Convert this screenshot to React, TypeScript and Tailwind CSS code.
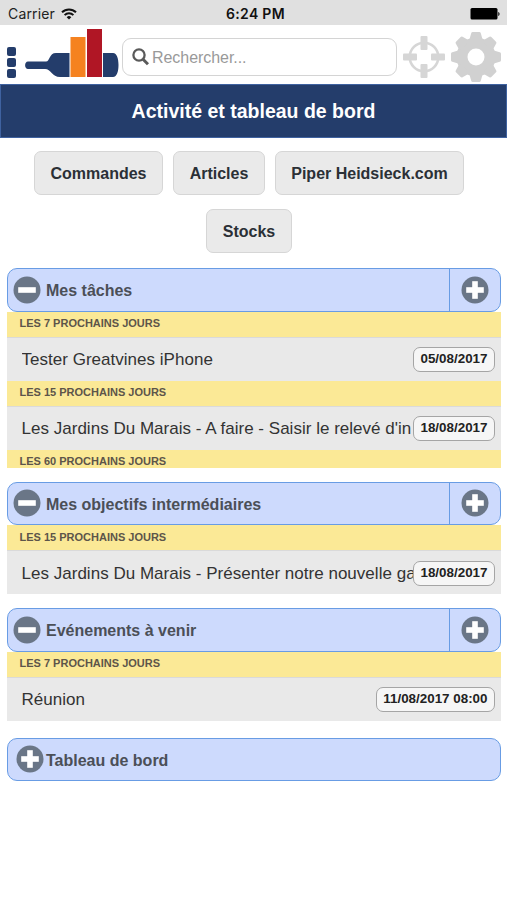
import { ReactNode } from "react";

type Row = {
  heading: string;
  label?: string;
  date?: string;
};

type PanelProps = {
  title: string;
  rows: Row[];
  className?: string;
};

const shortcuts = [
  { label: "Commandes", width: "w-[129px]" },
  { label: "Articles", width: "w-[92px]" },
  { label: "Piper Heidsieck.com", width: "w-[189px]" },
  { label: "Stocks", width: "w-[86px]" },
];

const tasks: Row[] = [
  {
    heading: "Les 7 prochains jours",
    label: "Tester Greatvines iPhone",
    date: "05/08/2017",
  },
  {
    heading: "Les 15 prochains jours",
    label: "Les Jardins Du Marais - A faire - Saisir le relevé d'in",
    date: "18/08/2017",
  },
  { heading: "Les 60 prochains jours" },
];

const goals: Row[] = [
  {
    heading: "Les 15 prochains jours",
    label: "Les Jardins Du Marais - Présenter notre nouvelle ga",
    date: "18/08/2017",
  },
];

const events: Row[] = [
  {
    heading: "Les 7 prochains jours",
    label: "Réunion",
    date: "11/08/2017 08:00",
  },
];

const gearTeeth = [0, 45, 90, 135, 180, 225, 270, 315];

function StatusBar() {
  return (
    <div className="grid h-[25px] grid-cols-3 items-center bg-[#e0e0e0] pt-[2px] pr-[6px] pl-[8px] font-[Inter,sans-serif] text-[#222]">
      <div className="flex items-center gap-[6px]">
        <span className="text-[14px] leading-none tracking-[0.15px]">Carrier</span>
        <svg width="16" height="12" viewBox="0 0 16 12" fill="none" stroke="#111" strokeWidth="2">
          <path d="M1 4.3a10 10 0 0 1 14 0" />
          <path d="M3.6 7.1a6.2 6.2 0 0 1 8.8 0" />
          <path d="M5.7 9.2a3.3 3.3 0 0 1 4.6 0L8 11.6Z" fill="#111" stroke="none" />
        </svg>
      </div>
      <span className="pl-[2px] text-center text-[14px] leading-none font-semibold tracking-[0.3px] text-[#111]">
        6:24 PM
      </span>
      <svg className="justify-self-end" width="31" height="14" viewBox="0 0 31 14">
        <rect x="0.5" y="1" width="27" height="11.5" rx="1.5" fill="#000" />
        <path d="M28.3 5v4c1.6-.4 1.6-3.6 0-4Z" fill="#000" />
      </svg>
    </div>
  );
}

function Logo() {
  return (
    <svg className="shrink-0" width="95" height="52" viewBox="0 0 95 52">
      <path
        d="M4 34.5h18C26 34.500 25 26 32 26h57c4 0 5.500 6 5.500 12s-1.500 12-5.500 12H36c-8 0-9-8-15-8H4c-3.800 0-3.800-7.500 0-7.500Z"
        fill="#243d6b"
      />
      <rect x="45.500" y="9" width="17" height="42" fill="#fff" />
      <rect x="61.500" y="1" width="17.500" height="50" fill="#fff" />
      <rect x="46.500" y="10" width="15" height="40" fill="#f58220" />
      <rect x="63" y="2" width="15" height="48" fill="#b01625" />
    </svg>
  );
}

function Crosshair() {
  return (
    <svg className="shrink-0" width="42" height="42" viewBox="0 0 42 42">
      <circle cx="21" cy="21" r="14.3" fill="none" stroke="#d6d6d6" strokeWidth="2.600" />
      <g fill="#d6d6d6">
        <rect x="17.500" y="0" width="7" height="14" rx="1" />
        <rect x="17.500" y="28" width="7" height="14" rx="1" />
        <rect x="0" y="17.500" width="14" height="7" rx="1" />
        <rect x="28" y="17.500" width="14" height="7" rx="1" />
      </g>
    </svg>
  );
}

function Gear() {
  return (
    <svg className="shrink-0" width="50" height="50" viewBox="0 0 50 50">
      <circle cx="25" cy="25" r="14" fill="none" stroke="#d1d1d1" strokeWidth="11" />
      {gearTeeth.map((angle) => (
        <path
          key={angle}
          d="M18 9 20.200 1.200Q20.500 0 21.700 0h6.600q1.200 0 1.500 1.200L32 9Z"
          transform={`rotate(${angle} 25 25)`}
          fill="#d1d1d1"
        />
      ))}
    </svg>
  );
}

function RoundIcon({ plus = false }: { plus?: boolean }) {
  return (
    <svg className="shrink-0" width="28" height="28" viewBox="0 0 28 28">
      <circle cx="14" cy="14" r="13.500" fill="#6a7687" />
      <rect x="5.200" y="11.200" width="17.600" height="5.600" fill="#fff" />
      {plus ? <rect x="11.200" y="5.200" width="5.600" height="17.600" fill="#fff" /> : null}
    </svg>
  );
}

function Header() {
  return (
    <header className="flex h-[59px] items-start">
      <div className="mt-[22px] ml-[7px] flex w-[9px] flex-col gap-[2.500px]">
        <span className="h-[8.500px] rounded-[2px] bg-[#243d6b]" />
        <span className="h-[8.500px] rounded-[2px] bg-[#243d6b]" />
        <span className="h-[8.500px] rounded-[2px] bg-[#243d6b]" />
      </div>
      <div className="mt-[2px] ml-[8px]">
        <Logo />
      </div>
      <div className="mt-[12.500px] ml-[3px] flex h-[38.500px] w-[275px] items-center rounded-[9px] border border-[#d4d4d4] pl-[9px]">
        <svg width="17" height="18" viewBox="0 0 17 18" fill="none" stroke="#5a5a5a">
          <circle cx="7" cy="7" r="5.600" strokeWidth="2.300" />
          <path d="M11 11.200 16 16.300" strokeWidth="3" />
        </svg>
        <span className="ml-[3px] pt-[2px] text-[16px] tracking-[-0.05px] text-[#999]">Rechercher...</span>
      </div>
      <div className="mt-[11px] ml-[6px]">
        <Crosshair />
      </div>
      <div className="mt-[7px] ml-[6px]">
        <Gear />
      </div>
    </header>
  );
}

function PanelHeader({ children, collapsed = false }: { children: ReactNode; collapsed?: boolean }) {
  return (
    <div className="flex h-[43.500px] overflow-hidden rounded-[10px] border border-[#689ce4] bg-[#cddafd]">
      <div className={`flex flex-1 items-center ${collapsed ? "pl-[8px]" : "pl-[5px]"}`}>
        <RoundIcon plus={collapsed} />
        <h2
          className={`pt-[3px] text-[16px] font-bold text-[#4b4f57] ${collapsed ? "ml-[2px]" : "ml-[5px]"}`}
        >
          {children}
        </h2>
      </div>
      {collapsed ? null : (
        <button
          type="button"
          className="flex w-[51px] items-center justify-center border-l border-[#689ce4]"
        >
          <RoundIcon plus />
        </button>
      )}
    </div>
  );
}

function Panel({ title, rows, className = "" }: PanelProps) {
  return (
    <section className={className}>
      <PanelHeader>{title}</PanelHeader>
      {rows.map((row) => (
        <div key={row.heading}>
          <h3 className="flex h-[25px] items-center bg-[#fbe996] pb-[1px] pl-[12.500px] text-[11px] font-bold text-[#5d554a] uppercase">
            {row.heading}
          </h3>
          {row.label ? (
            <div className="flex h-[44px] items-center border-t border-[#dadada] bg-[#e9e9e9] pt-[1px] pr-[6px] pl-[14.500px] text-[#333]">
              <span className="min-w-0 flex-1 overflow-hidden pt-[1px] text-[17px] tracking-[0.02px] whitespace-nowrap">
                {row.label}
              </span>
              <span className="flex h-[25px] shrink-0 items-center rounded-[7px] border border-[#a5a5a5] bg-[#f6f6f6] px-[6.500px] text-[13.400px] font-bold text-[#222]">
                {row.date}
              </span>
            </div>
          ) : null}
        </div>
      ))}
    </section>
  );
}

export default function App() {
  return (
    <main className="h-[900px] w-[507px] overflow-hidden bg-white font-['Liberation_Sans',Arial,sans-serif]">
      <StatusBar />
      <Header />
      <h1 className="flex h-[54px] items-center justify-center border border-[#3f62a0] bg-[#243d6b] pt-[2px] text-[19.500px] font-bold text-white">
        Activité et tableau de bord
      </h1>

      <nav className="mx-[7px] mt-[13px] flex flex-wrap justify-center gap-x-[10px] gap-y-[14px] pr-[9px]">
        {shortcuts.map((shortcut) => (
          <button
            key={shortcut.label}
            type="button"
            className={`h-[44px] rounded-[7px] border border-[#d6d6d6] bg-[#eaeaea] pt-[2px] text-[16px] font-bold whitespace-nowrap text-[#2b3036] ${shortcut.width}`}
          >
            {shortcut.label}
          </button>
        ))}
      </nav>

      <div className="mt-[15px] pr-[6px] pl-[7px]">
        <Panel title="Mes tâches" rows={tasks} className="h-[199.500px] overflow-hidden" />
        <Panel title="Mes objectifs intermédiaires" rows={goals} className="mt-[14px]" />
        <Panel title="Evénements à venir" rows={events} className="mt-[14px]" />
        <div className="mt-[17px]">
          <PanelHeader collapsed>Tableau de bord</PanelHeader>
        </div>
      </div>
    </main>
  );
}
